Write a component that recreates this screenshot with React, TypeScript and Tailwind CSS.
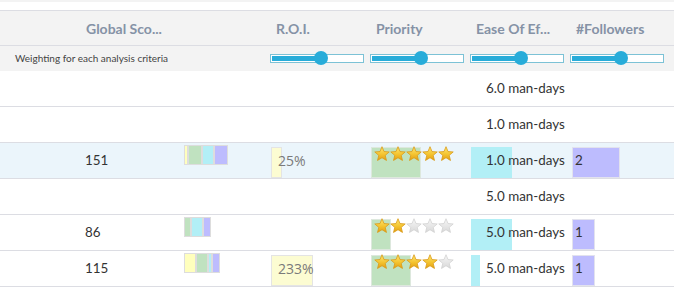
import React from "react";

type Row = {
  score?: number;
  bars?: [number, number, number, number];
  roi?: string;
  roiW?: number;
  prio?: number;
  prioW?: number;
  ease: string;
  easeW?: number;
  fol?: string;
  folW?: number;
  hl?: boolean;
};

const rows: Row[] = [
  { ease: "6.0" },
  { ease: "1.0" },
  { score: 151, bars: [2, 12, 10, 12], roi: "25%", roiW: 11, prio: 5, prioW: 50, ease: "1.0", easeW: 41, fol: "2", folW: 48, hl: true },
  { ease: "5.0" },
  { score: 86, bars: [0, 5, 10, 6], prio: 2, prioW: 20, ease: "5.0", easeW: 41, fol: "1", folW: 23 },
  { score: 115, bars: [10, 10, 2, 6], roi: "233%", roiW: 42, prio: 4, prioW: 40, ease: "5.0", easeW: 9, fol: "1", folW: 23 },
];

const STAR = "M8 0.7 L10 5.55 L15.23 5.95 L11.23 9.35 L12.47 14.45 L8 11.7 L3.53 14.45 L4.77 9.35 L0.77 5.95 L6 5.55 Z";

function Star({ on }: { on: boolean }) {
  return (
    <svg width="16" height="16" viewBox="0 0 16 16" className="block">
      <path
        d={STAR}
        fill={on ? "url(#gold)" : "url(#grey)"}
        stroke={on ? "#d99a19" : "#d2d2d2"}
        strokeWidth="0.8"
        strokeLinejoin="round"
      />
    </svg>
  );
}

function Slider() {
  return (
    <div className="relative ml-[2px] w-[94px] h-[9px] border border-[#7cc2d6] bg-white p-[1px]">
      <div className="h-full w-[48px] bg-[#28acd9]" />
      <div className="absolute left-[43px] top-[-4px] w-[14px] h-[14px] rounded-full bg-[#28acd9]" />
    </div>
  );
}

const segColors = ["bg-[#ffffbd]", "bg-[#c0e2c0]", "bg-[#b2eff6]", "bg-[#bdbcfe]"];

export default function App() {
  return (
    <div
      className="w-[674px] h-[294px] bg-white overflow-hidden text-[#333]"
      style={{ fontFamily: "Lato, 'Open Sans', sans-serif" }}
    >
      <svg width="0" height="0" className="absolute">
        <defs>
          <linearGradient id="gold" x1="0" y1="0" x2="0" y2="1">
            <stop offset="0" stopColor="#ffe774" />
            <stop offset="0.55" stopColor="#f4c430" />
            <stop offset="1" stopColor="#e39e10" />
          </linearGradient>
          <linearGradient id="grey" x1="0" y1="0" x2="0" y2="1">
            <stop offset="0" stopColor="#f7f7f7" />
            <stop offset="1" stopColor="#d8d8d8" />
          </linearGradient>
        </defs>
      </svg>
      <div className="h-[2px] bg-[#f3f3f3]" />
      <div className="h-[8px] bg-white" />
      <div className="h-[36px] border-y border-[#dcdde3] bg-[#f3f3f3] flex items-center font-bold text-[14px] text-[#8592a6]">
        <div className="w-[78px]" />
        <div className="w-[190px] pl-[8px]">Global Sco...</div>
        <div className="w-[100px] pl-[8px]">R.O.I.</div>
        <div className="w-[100px] pl-[8px]">Priority</div>
        <div className="w-[100px] pl-[8px]">Ease Of Ef...</div>
        <div className="w-[100px] pl-[8px]">#Followers</div>
      </div>
      <div className="h-[25px] bg-[#f3f3f3] flex items-center">
        <div className="w-[268px] pl-[15px] text-[10px] text-[#444]">Weighting for each analysis criteria</div>
        <div className="w-[100px]"><Slider /></div>
        <div className="w-[100px]"><Slider /></div>
        <div className="w-[100px]"><Slider /></div>
        <div className="w-[100px]"><Slider /></div>
      </div>
      {rows.map((r, i) => (
        <div
          key={i}
          className={`h-[36px] border-b border-[#dcdde3] flex text-[13.4px] ${r.hl ? "bg-[#ebf5fb]" : "bg-white"}`}
        >
          <div className="w-[78px]" />
          <div className="w-[100px] pl-[7px] flex items-center">{r.score ?? ""}</div>
          <div className="w-[90px] pl-[6px] pt-[2px]">
            {r.bars && (
              <div className="flex">
                {r.bars.map((w, j) =>
                  w > 0 ? (
                    <div key={j} className={`h-[20px] border border-[#dddddd] ${segColors[j]}`} style={{ width: w + 2 }} />
                  ) : null
                )}
              </div>
            )}
          </div>
          <div className="relative w-[100px] flex items-center">
            {r.roi && (
              <>
                <div className="absolute left-[3px] top-[4px] bottom-0 border border-[#e4e4e4] bg-[#fcfcd2]" style={{ width: r.roiW }} />
                <span className="relative pl-[10px] text-[14px] text-[#7a7a7a]" style={{ fontFamily: "'Open Sans', sans-serif" }}>
                  {r.roi}
                </span>
              </>
            )}
          </div>
          <div className="relative w-[100px]">
            {r.prio !== undefined && (
              <>
                <div className="absolute left-[3px] top-[4px] bottom-0 border border-[#dde8dd] bg-[#c0e2c0]" style={{ width: r.prioW }} />
                <div className="relative flex pl-[6px] pt-[3px]">
                  {[0, 1, 2, 3, 4].map((k) => (
                    <Star key={k} on={k < (r.prio ?? 0)} />
                  ))}
                </div>
              </>
            )}
          </div>
          <div className="relative w-[100px] flex items-center">
            {r.easeW && (
              <div className="absolute left-[3px] top-[4px] bottom-0 bg-[#b2eff6]" style={{ width: r.easeW }} />
            )}
            <span className="relative pl-[18px] whitespace-nowrap">{r.ease} man-days</span>
          </div>
          <div className="relative w-[100px] flex items-center">
            {r.fol && (
              <>
                <div className="absolute left-[4px] top-[4px] bottom-0 border border-[#e2e2ee] bg-[#bdbcfe]" style={{ width: r.folW }} />
                <span className="relative pl-[7px]">{r.fol}</span>
              </>
            )}
          </div>
        </div>
      ))}
    </div>
  );
}
